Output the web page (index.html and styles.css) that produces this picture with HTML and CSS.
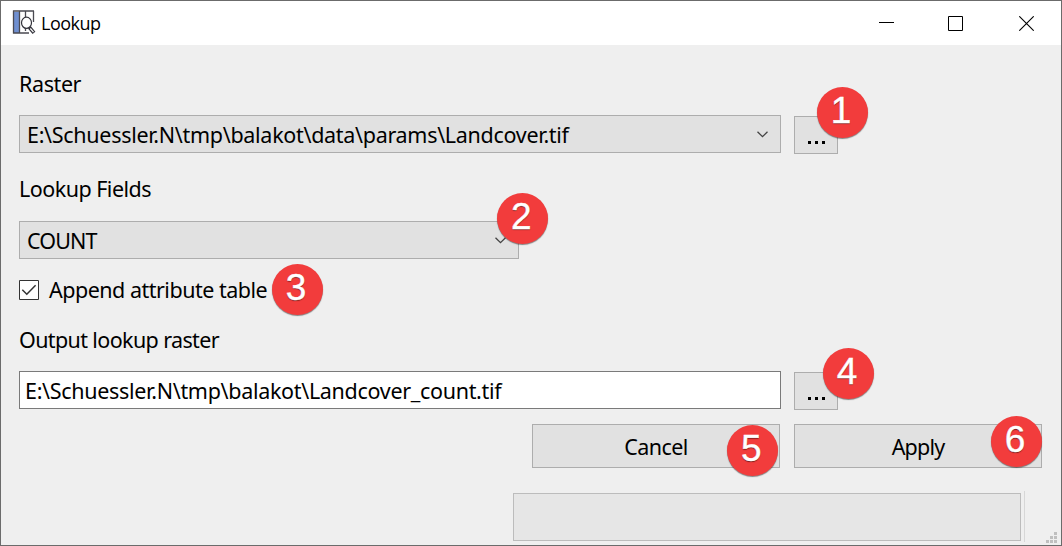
FILE: index.html
```html
<!DOCTYPE html>
<html lang="en">
<head>
<meta charset="utf-8">
<title>Lookup</title>
<link rel="stylesheet" href="styles.css">
</head>
<body>
<main class="window">
  <header class="titlebar">
    <svg class="app-icon" width="24" height="24" viewBox="0 0 24 24" fill="none">
      <path d="M2 2H7V23H2Z" fill="#6f8fd0"/>
      <path d="M1.5 .5V23.5M1 1H22M1 23H17M7.5 1V23.5M21.5 1V12M13.5 1V7M13.5 18V21" stroke="#4a4a52" stroke-width="1.3"/>
      <ellipse cx="14.5" cy="12.8" rx="5" ry="5.6" fill="#fff" stroke="#33333b" stroke-width="1.2"/>
      <path d="M17.5 17.5L22 22.8" stroke="#33333b" stroke-width="3.6"/>
      <path d="M18.3 18.5L21.5 22.2" stroke="#fff" stroke-width="1.2"/>
    </svg>
    <h1 class="title">Lookup</h1>
    <div class="controls">
      <svg width="15" height="15" viewBox="0 0 15 15"><path d="M0 7.5H15" stroke="#000"/></svg>
      <svg width="15" height="15" viewBox="0 0 15 15"><path d="M.5 .5H14.5V14.5H.5Z" fill="none" stroke="#000"/></svg>
      <svg width="15" height="15" viewBox="0 0 15 15"><path d="M.3 .3L14.7 14.7M14.7 .3L.3 14.7" stroke="#000" stroke-width="1.1"/></svg>
    </div>
  </header>
  <form class="form">
    <div class="label"><span class="t-raster">Raster</span></div>
    <div class="row">
      <div class="combo wide"><span class="t-path">E:\Schuessler.N\tmp\balakot\data\params\Landcover.tif</span>
        <svg width="11" height="7" viewBox="0 0 11 7" fill="none"><path d="M.5 .7L5.5 5.7L10.5 .7" stroke="#444" stroke-width="1.3"/></svg></div>
      <div class="browse"><i></i><i></i><i></i><b class="badge one">1</b></div>
    </div>
    <div class="label fields"><span class="t-fields">Lookup Fields</span></div>
    <div class="combo short"><span class="t-count">COUNT</span>
      <svg width="11" height="7" viewBox="0 0 11 7" fill="none"><path d="M.5 .7L5.5 5.7L10.5 .7" stroke="#444" stroke-width="1.3"/></svg>
      <b class="badge two">2</b></div>
    <div class="check">
      <svg class="box" width="20" height="20" viewBox="0 0 20 20"><path d="M.5 .5H19.5V19.5H.5Z" fill="#fff" stroke="#333"/><path d="M3.3 9.8L7.8 14.2L16.6 5.2" fill="none" stroke="#333" stroke-width="1.5"/></svg>
      <span class="t-append">Append attribute table</span>
      <b class="badge three">3</b>
    </div>
    <div class="label output"><span class="t-output">Output lookup raster</span></div>
    <div class="row">
      <div class="input wide"><span class="t-out-path">E:\Schuessler.N\tmp\balakot\Landcover_count.tif</span></div>
      <div class="browse"><i></i><i></i><i></i><b class="badge four">4</b></div>
    </div>
    <div class="actions">
      <div class="button"><span class="t-cancel">Cancel</span><b class="badge five">5</b></div>
      <div class="button"><span class="t-apply">Apply</span><b class="badge six">6</b></div>
    </div>
  </form>
  <footer class="status">
    <div class="progress"></div>
    <div class="divider"></div>
    <svg class="grip" width="11" height="11" viewBox="0 0 11 11" fill="#bfbfbf"><path d="M8 0h3v3h-3zM4 4h3v3h-3zM8 4h3v3h-3zM0 8h3v3h-3zM4 8h3v3h-3zM8 8h3v3h-3z"/></svg>
  </footer>
</main>
</body>
</html>
```
FILE: styles.css
```css
* { box-sizing: border-box; }
body { margin: 0; }
.window {
  width: 1062px; height: 546px;
  border: 1px solid #6b6b6b;
  background: #efefef;
  display: flex; flex-direction: column;
  overflow: hidden;
  color: #000;
  font-family: "Noto Sans", sans-serif;
  font-size: 21.5px;
  line-height: 30px;
  white-space: nowrap;
}
.titlebar { height: 44px; flex: none; background: #fff; display: flex; align-items: center; padding: 0 27px 0 11px; }
.app-icon { margin-top: -2px; }
.title { margin: 0 0 0 5px; font-size: 18px; font-weight: 400; font-family: "Open Sans", sans-serif; line-height: 24px; letter-spacing: -.5px; }
.controls { margin-left: auto; display: flex; gap: 55px; }
.controls svg:first-child { margin-top: -1px; margin-right: -1px; }
.controls svg:last-child { margin-left: 1px; }
.form { padding: 24px 0 0 18px; display: flex; flex-direction: column; }
.label { height: 30px; }
.row { display: flex; gap: 13px; margin-top: 16px; height: 39px; }
.wide { width: 762px; }
.short { width: 500px; margin-top: 17px; }
.combo, .input { height: 38px; display: flex; align-items: center; position: relative; }
.combo { border: 1px solid #adadad; background: #e1e1e1; padding: 2px 12px 0 7px; justify-content: space-between; }
.combo svg { margin-top: -2px; }
.input { border: 1px solid #7a7a7a; background: #fff; padding: 2px 5px 0; }
.browse { width: 44px; height: 38px; margin-top: 1px; border: 1px solid #adadad; background: #e1e1e1; display: flex; justify-content: center; align-items: flex-end; gap: 4px; padding-bottom: 9px; position: relative; }
.browse i { width: 3px; height: 3px; background: #000; }
.fields { margin-top: 20px; }
.check { display: flex; align-items: center; height: 30px; gap: 10px; margin-top: 16px; position: relative; }
.check .box { margin-top: -1px; }
.output { margin-top: 20px; }
.actions { display: flex; gap: 14px; margin: 14px 0 0 513px; }
.button { width: 248px; height: 44px; border: 1px solid #adadad; background: #e1e1e1; display: flex; justify-content: center; align-items: center; padding-top: 2px; position: relative; }
.status { display: flex; padding-left: 512px; margin-top: 23px; height: 53px; }
.progress { width: 508px; height: 48px; margin-top: 2px; border: 1px solid #bcbcbc; background: #e6e6e6; }
.divider { width: 1px; height: 51px; margin-left: 3px; background: #d7d7d7; }
.grip { margin: 41px 0 0 21px; }
.t-raster { letter-spacing: -.4px; }
.t-path { letter-spacing: -.3px; }
.t-fields { letter-spacing: -.52px; }
.t-count { letter-spacing: -.85px; }
.t-append { letter-spacing: -.5px; }
.t-output { letter-spacing: -.62px; }
.t-out-path { letter-spacing: -.31px; }
.t-cancel { letter-spacing: -.6px; }
.t-apply { letter-spacing: -.8px; }
.badge {
  position: absolute; width: 51px; height: 51px; border-radius: 50%;
  background: #f23c3c; color: #fff;
  box-shadow: 0 1px 1px rgba(0,0,0,.45);
  font: 400 37px/47px "Liberation Sans", sans-serif;
  text-align: center; padding-right: 2px;
  -webkit-text-stroke: .4px #fff;
  text-shadow: 0 1px 1px rgba(0,0,0,.5);
}
.one { left: 21.5px; top: -30.5px; }
.two { left: 476.7px; top: -29.5px; }
.three { left: 252.5px; top: -11px; }
.four { left: 27.5px; top: -25px; }
.five { left: 193.7px; top: -.5px; }
.six { left: 195.5px; top: -9.5px; }
```
